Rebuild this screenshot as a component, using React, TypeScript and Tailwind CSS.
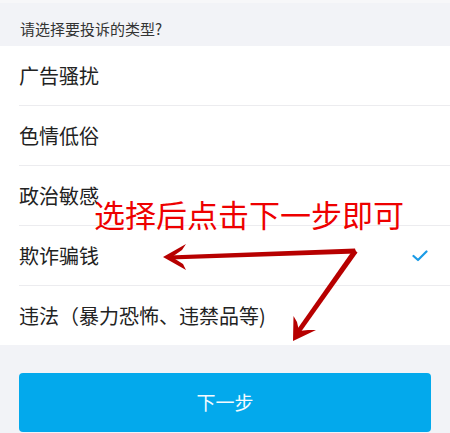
import React, { useState } from 'react';

const options = ['广告骚扰', '色情低俗', '政治敏感', '欺诈骗钱', '违法（暴力恐怖、违禁品等)'];

export default function App() {
  const [selected, setSelected] = useState(3);

  return (
    <div
      className="relative w-[450px] h-[433px] overflow-hidden bg-[#f2f3f7] text-[#222]"
      style={{ fontFamily: '"Noto Sans CJK SC", "Noto Sans", sans-serif' }}
    >
      {/* Header */}
      <div className="h-[46px] flex items-end pb-[10px] pl-[20px] border-t-[3px] border-[#f7f7f9]">
        <span className="text-[15px] leading-none text-[#333]">请选择要投诉的类型?</span>
      </div>

      {/* Options */}
      <div className="bg-white">
        {options.map((label, i) => (
          <div
            key={label}
            onClick={() => setSelected(i)}
            className="h-[60px] pl-[19px] last:h-[59px]"
          >
            <div
              className={`h-full flex items-center justify-between pr-[22px] ${
                i < options.length - 1 ? 'border-b border-[#ececef]' : ''
              }`}
            >
              <span className="text-[20px] leading-none">{label}</span>
              {selected === i && (
                <svg width="16" height="12" viewBox="0 0 16 12" fill="none">
                  <path d="M1.5 6 L6 10 L14.5 1.5" stroke="#1a9be6" strokeWidth="2.2" strokeLinecap="round" strokeLinejoin="round" />
                </svg>
              )}
            </div>
          </div>
        ))}
      </div>

      {/* Next button */}
      <div className="px-[19px] pt-[28px]">
        <button className="w-full h-[59px] rounded-[4px] bg-[#03a9ec] text-[#f4fbff] text-[19px] flex items-center justify-center">
          下一步
        </button>
      </div>

      {/* Annotation overlay */}
      <div className="absolute left-[94px] top-[198px] text-[31px] leading-none text-[#ee0000] pointer-events-none whitespace-nowrap">
        选择后点击下一步即可
      </div>
      <svg className="absolute left-0 top-0 pointer-events-none" width="450" height="433" viewBox="0 0 450 433">
        <g fill="#b70000">
          <path d="M355 248.5 L356.5 253.5 L170 259.5 L169 255.5 Z" />
          <path d="M163 257 L186 244 L182 250 L172 257 L183 264 L186 270 Z" />
          <path d="M353.5 249 L357.5 252.5 L298 336 L294.5 333 Z" />
          <path d="M293 341 L293.5 316 L297 322 L299 331 L308 330 L316 330 Z" />
        </g>
      </svg>
    </div>
  );
}
